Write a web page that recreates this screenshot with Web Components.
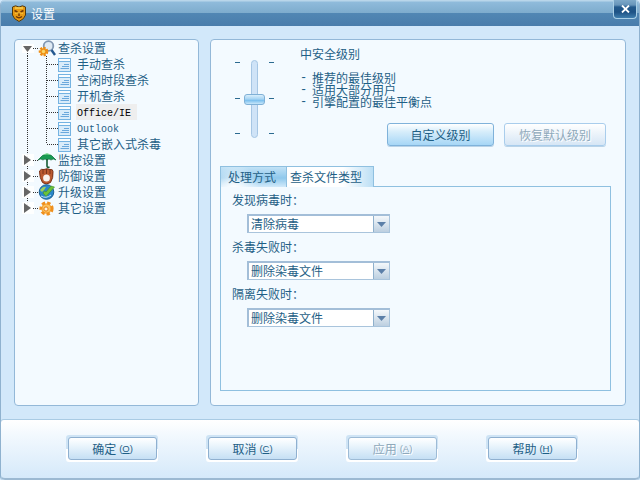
<!DOCTYPE html>
<html lang="zh"><head><meta charset="utf-8"><title>设置</title>
<style>
html,body{margin:0;padding:0;background:#d2e8fa}
body{width:640px;height:480px;overflow:hidden;font:12px/12px "Noto Sans CJK SC","Liberation Sans",sans-serif;color:#1f5f86}
</style></head><body>
<x-window>
  <x-titlebar slot="title">设置</x-titlebar>
  <x-panel slot="left" style="width:185px">
    <x-tree>
      <x-row root open first icon="search">查杀设置</x-row>
      <x-row>手动查杀</x-row>
      <x-row>空闲时段查杀</x-row>
      <x-row>开机查杀</x-row>
      <x-row selected mono>Office/IE</x-row>
      <x-row mono>Outlook</x-row>
      <x-row last>其它嵌入式杀毒</x-row>
      <x-row root icon="umbrella">监控设置</x-row>
      <x-row root icon="glove">防御设置</x-row>
      <x-row root icon="globe">升级设置</x-row>
      <x-row root final icon="gear">其它设置</x-row>
    </x-tree>
  </x-panel>
  <x-panel slot="right" style="width:416px">
    <x-security>
      <div>中安全级别</div>
      <ul slot="points"><li>推荐的最佳级别</li><li>适用大部分用户</li><li>引擎配置的最佳平衡点</li></ul>
      <x-button slot="actions" w="107" h="23" strong>自定义级别</x-button>
      <x-button slot="actions" w="102" h="23" strong disabled>恢复默认级别</x-button>
    </x-security>
    <x-tabs>
      <x-form-row label="发现病毒时" value="清除病毒"></x-form-row>
      <x-form-row label="杀毒失败时" value="删除染毒文件"></x-form-row>
      <x-form-row label="隔离失败时" value="删除染毒文件"></x-form-row>
    </x-tabs>
  </x-panel>
  <x-footer slot="footer">
    <x-button w="89" h="23" halo>确定 <small>(<u>O</u>)</small></x-button>
    <x-button w="89" h="23" halo>取消 <small>(<u>C</u>)</small></x-button>
    <x-button w="89" h="23" halo disabled>应用 <small>(<u>A</u>)</small></x-button>
    <x-button w="89" h="23" halo>帮助 <small>(<u>H</u>)</small></x-button>
  </x-footer>
</x-window>
<script>
function def(name,html,extra){
  customElements.define(name,class extends HTMLElement{
    constructor(){super();this.attachShadow({mode:'open'}).innerHTML=typeof html==='function'?html(this):html;}
    connectedCallback(){if(extra)extra(this);}
  });
}
def('x-window',`<style>
:host{display:flex;flex-direction:column;width:640px;height:480px;box-sizing:border-box;background:#d2e8fa;border-left:1px solid #8fb2cf;border-right:1px solid #8fb2cf;border-radius:5px 5px 4px 4px;overflow:hidden}
.main{flex:1;display:flex;gap:11px;padding:13px;min-height:0}
</style><slot name="title"></slot><div class="main"><slot name="left"></slot><slot name="right"></slot></div><slot name="footer"></slot>`);
def('x-titlebar',`<style>
:host{display:flex;align-items:center;height:26px;flex:none;margin:0 -1px;padding-left:12px;box-sizing:border-box;color:#fff;
background:linear-gradient(#b9d6ea 0,#b9d6ea 1px,#8fbbdb 2px,#7eaccd 13px,#5187b4 13px,#4a7dab 26px);position:relative}
.t{margin-left:5px;font-size:12px;padding-top:1px}
.x{position:absolute;right:3px;top:0;width:24px;height:19px;box-sizing:border-box;border:1px solid #a9cfe6;border-top:0;border-radius:0 0 4px 4px;background:linear-gradient(#7ea9c9 0,#6795ba 5px,#235a8c 7px,#1d5285 12px,#3f7eae 18px);display:flex;align-items:center;justify-content:center}
</style>
<svg width="14" height="17" viewBox="0 0 14 17"><path d="M.5 2L3.500 .8L7 2L10.500 .8L13.500 2V10Q12.500 14 7 16.500Q1.500 14 .5 10Z" fill="#e89a14" stroke="#4f3a12"/><path d="M3 3H11" stroke="#f8d050" stroke-width="1.500"/><path d="M2.500 5.500L5.500 7M11.500 5.500L8.500 7M7 7.500V11M4 11.500Q7 14 10 11.500" stroke="#6e3606" stroke-width="1.400" fill="none"/><path d="M3 8.500Q7 7 11 8.500" stroke="#f7c23d" fill="none"/></svg>
<span class="t"><slot></slot></span>
<div class="x"><svg width="9" height="8" viewBox="0 0 9 8"><path d="M1 .500L8 7.500M8 .500L1 7.500" stroke="#fff" stroke-width="1.800"/></svg></div>`);
def('x-panel',`<style>:host{display:block;flex:none;box-sizing:border-box;height:367px;background:#f3faff;border:1px solid #93b8d8;border-radius:4px}</style><slot></slot>`);
def('x-tree',`<style>:host{display:block;padding-left:5px}</style><slot></slot>`);
const ICONS={
search:`<circle cx="10.500" cy="6" r="4.800" fill="#dfeaf4" stroke="#8197b2" stroke-width="1.800"/><path d="M13.500 10L17 15" stroke="#24588f" stroke-width="2.400"/><circle cx="5.500" cy="11.500" r="3.300" fill="#f09a1e" stroke="#ee8d12" stroke-width="3" stroke-dasharray="2 1"/><circle cx="5.500" cy="11.500" r="1.700" fill="#f8d66a"/>`,
umbrella:`<path d="M0 8Q9 -4 18 8Q15 6 13 8Q11 6 9 8Q7 6 5 8Q3 6 0 8Z" fill="#189a52" stroke="#0f6f3c" stroke-width=".7"/><path d="M5 3Q9 -.5 13 3Q9 2 5 3Z" fill="#86e596"/><path d="M9 7V14Q9 16 11.500 15" stroke="#155a33" stroke-width="1.600" fill="none"/>`,
glove:`<path d="M1.500 3Q3 .5 6 1.500Q9 0 12 1.500Q15 1 15 3.500Q15.500 10 12.500 14.500Q8 17.500 4.500 14.500Q1.500 10 1.500 3Z" fill="#bb5a30" stroke="#7b3319"/><path d="M5 1.500V6M8.500 1V6M12 1.500V6" stroke="#7b3319"/><ellipse cx="8.500" cy="10" rx="3.400" ry="3.600" fill="#f9f3ee"/>`,
globe:`<circle cx="8.500" cy="8" r="7.300" fill="#2a87c8" stroke="#1c5f92"/><path d="M2 6Q5 2 8 3Q6 7 4 8Z" fill="#9ccf5e"/><path d="M5 9L8 12.500L16.500 3L13 2L8 8L6.500 7Z" fill="#6cc23a" stroke="#3f8f24" stroke-width=".6"/><path d="M3 12Q8 15 13 11" stroke="#bfe2f5" fill="none"/>`,
gear:`<circle cx="8.500" cy="8.500" r="5.200" fill="#f5a735" stroke="#ef8f1d" stroke-width="3.800" stroke-dasharray="3 1.900"/><circle cx="8.500" cy="8.500" r="4" fill="#fbc25f"/><circle cx="8" cy="9" r="2.100" fill="#fff4dc" stroke="#e67c12"/>`
};
def('x-row',el=>{
  const root=el.hasAttribute('root'),h=el.hasAttribute('mono');
  const dot='stroke="#333" stroke-dasharray="1 1" fill="none"';
  let gut;
  if(root){
    const open=el.hasAttribute('open'),first=el.hasAttribute('first'),fin=el.hasAttribute('final');
    const v=first?`<path d="M7.500 13V16" ${dot}/>`:`<path d="M7.500 0V${fin?8:16}" ${dot}/>`;
    const tri=open?`<path d="M3 6H12L7.500 12Z" fill="#666"/>`:`<path d="M4 3L11 8L4 13Z" fill="#666"/>`;
    gut=`<svg width="18" height="16" viewBox="0 0 18 16" style="flex:none">${v}<rect x="2" y="${open?4:2}" width="12" height="${open?9:12}" fill="#fff" opacity=".9"/>${tri}<path d="M13 8.500H18" ${dot}/></svg>
    <svg width="18" height="16" viewBox="0 0 18 16" style="flex:none;overflow:visible">${ICONS[el.getAttribute('icon')]}</svg>`;
  }else{
    const last=el.hasAttribute('last');
    gut=`<svg width="38" height="16" viewBox="0 0 38 16" style="flex:none"><path d="M7.500 0V16" ${dot}/><path d="M26.500 0V${last?8:16}" ${dot}/><path d="M27 8.500H38" ${dot}/></svg>
    <svg width="13" height="14" viewBox="0 0 13 14" style="flex:none;margin-top:2px"><rect x=".5" y=".5" width="12" height="13" fill="#d9ecfa" stroke="#74b3e2"/><rect x="1" y="1" width="11" height="2" fill="#f7fcff"/><path d="M1 3.500H12" stroke="#74b3e2"/><path d="M6 6.500H11M4 8.500H11M2.500 10.500H11" stroke="#6aa8dc"/></svg>`;
  }
  const sel=el.hasAttribute('selected');
  return `<style>:host{display:flex;height:16px;align-items:flex-start}
  .l{height:16px;line-height:${h?19:16}px;white-space:nowrap;margin-left:${root?1:5}px;padding:0 ${sel?6:1}px 0 1px;${sel?'background:#eee;color:#000;':''}${h?'font-family:"Liberation Mono",monospace;font-size:10px;':''}}
  </style>${gut}<span class="l"><slot></slot></span>`;
});
def('x-security',`<style>
:host{display:grid;grid-template-columns:75px 1fr;height:126px;box-sizing:border-box;padding:7px 0 0 14px}
.info{line-height:14px}
::slotted(ul){list-style:none;margin:0;padding:0}
.points{margin-top:11px}
.acts{display:flex;justify-content:flex-end;gap:10px;margin:15px 19px 0 0}
.sl{display:grid;grid-template-columns:8px 22px 8px;justify-content:start;padding:13px 0 0 10px;height:80px;position:relative}
.ticks{display:flex;flex-direction:column;justify-content:space-between;height:72px;padding-top:2px}
.ticks i{display:block;width:5px;height:1px;background:#2b6a90}
.r i{margin-left:4px}
.track{justify-self:center;width:7px;height:78px;box-sizing:border-box;background:#cfe3f7;border:1px solid #a6c6e4;border-radius:4px}
.thumb{position:absolute;left:19px;top:47px;width:21px;height:11px;box-sizing:border-box;border:1px solid #7fb0d6;border-radius:3px;background:linear-gradient(#d8eefc 0,#a6d4f3 45%,#7cc0ee 60%,#c8e6fa 100%)}
</style>
<div class="sl"><div class="ticks"><i></i><i></i><i></i></div><div class="track"></div><div class="ticks r"><i></i><i></i><i></i></div><div class="thumb"></div></div>
<div class="info"><slot></slot><div class="points"><slot name="points"></slot></div><div class="acts"><slot name="actions"></slot></div></div>`,el=>{
  el.querySelectorAll('li').forEach(li=>{
    li.style.cssText='display:flex;gap:7px;height:12px;line-height:12px;';
    const s=document.createElement('span');s.textContent='-';s.style.cssText='width:5px;font-family:"Liberation Mono",monospace';li.prepend(s);
  });
});
def('x-button',el=>{
  const d=el.hasAttribute('disabled'),strong=el.hasAttribute('strong'),halo=el.hasAttribute('halo');
  const bg=strong?(d?'linear-gradient(#fff,#d6e6f5)':'linear-gradient(#fff 0,#d8eefb 35%,#a6d6f6 100%)'):'linear-gradient(#fff 0,#eef7fd 30%,#c5dff4 100%)';
  const bd=strong?(d?'#a9cdec':'#7fb2da'):(d?'#9dbbd6':'#8fb0d0');
  const col=d?'#8fa9bb':'#1f5f86';
  return `<style>:host{display:inline-block;flex:none;font-size:12px}
  .o{${halo?'padding:2px 1px 2px 2px;background:linear-gradient(180deg,#cfe4f5 50%,#fff 50%);':''}border-radius:3px}
  .b{box-sizing:border-box;width:${el.getAttribute('w')}px;height:${el.getAttribute('h')}px;border:1px solid ${bd};border-radius:3px;background:${bg};color:${col};display:flex;align-items:center;justify-content:center;white-space:nowrap;${strong?'box-shadow:0 1px 0 #b9d3e8;':''}${d?'text-shadow:1px 1px 0 #fff;':''}}
  ::slotted(small){font:9.5px "Liberation Sans",sans-serif;margin-left:3px}
  </style><div class="o"><div class="b"><slot></slot></div></div>`;
});
def('x-tabs',`<style>
:host{display:block;width:391px;margin-left:9px}
.h{display:flex;height:21px}
.tab{box-sizing:border-box;height:21px;line-height:20px;border:1px solid #8fc0e0;border-bottom:0;padding-left:7px}
.a{width:67px;background:radial-gradient(circle at 20% 110%,#fff 0,#fff0 45%),linear-gradient(#c2e2f6 0,#8fc8ec 55%,#d2eafa 100%)}
.i{width:88px;margin-left:-1px;padding-left:3px;background:linear-gradient(90deg,#fff 65%,#bcdff5 100%)}
.c{box-sizing:border-box;height:205px;margin-top:-1px;border:1px solid #8fc0e0;padding:7px 0 0 11px}
</style><div class="h"><div class="tab a">处理方式</div><div class="tab i">查杀文件类型</div></div><div class="c"><slot></slot></div>`);
def('x-form-row',el=>`<style>
:host{display:block;height:47px}
.l{height:12px;line-height:12px}
.l span{font-family:"Noto Sans CJK TC",sans-serif}
.s{display:flex;box-sizing:border-box;width:143px;height:19px;margin:8px 0 0 15px;background:#fff;border:1px solid #a9c4dc;border-top:2px solid #a3bed8;border-left:2px solid #a3bed8}
.v{flex:1;line-height:16px;padding-left:2px}
.ar{width:15px;border-left:1px solid #8fb0cc;background:linear-gradient(#f4f8fb,#bccfe0);display:flex;align-items:center;justify-content:center}
</style><div class="l">${el.getAttribute('label')}<span>：</span></div>
<div class="s"><div class="v">${el.getAttribute('value')}</div><div class="ar"><svg width="9" height="5" viewBox="0 0 9 5"><path d="M0 0H9L4.500 5Z" fill="#5b7fa8"/></svg></div></div>`);
def('x-footer',`<style>
:host{display:flex;flex:none;height:61px;box-sizing:border-box;margin:0 -1px;padding:15px 0 0 65px;gap:48px;background:linear-gradient(#fff 0,#f3f9fe 25%,#d5e9fa 100%);border:1px solid #a3c3dd;border-top-color:#a9cbe4;border-bottom:2px solid #9cb9d2;border-radius:4px 4px 5px 5px}
</style><slot></slot>`);
</script>
</body></html>
